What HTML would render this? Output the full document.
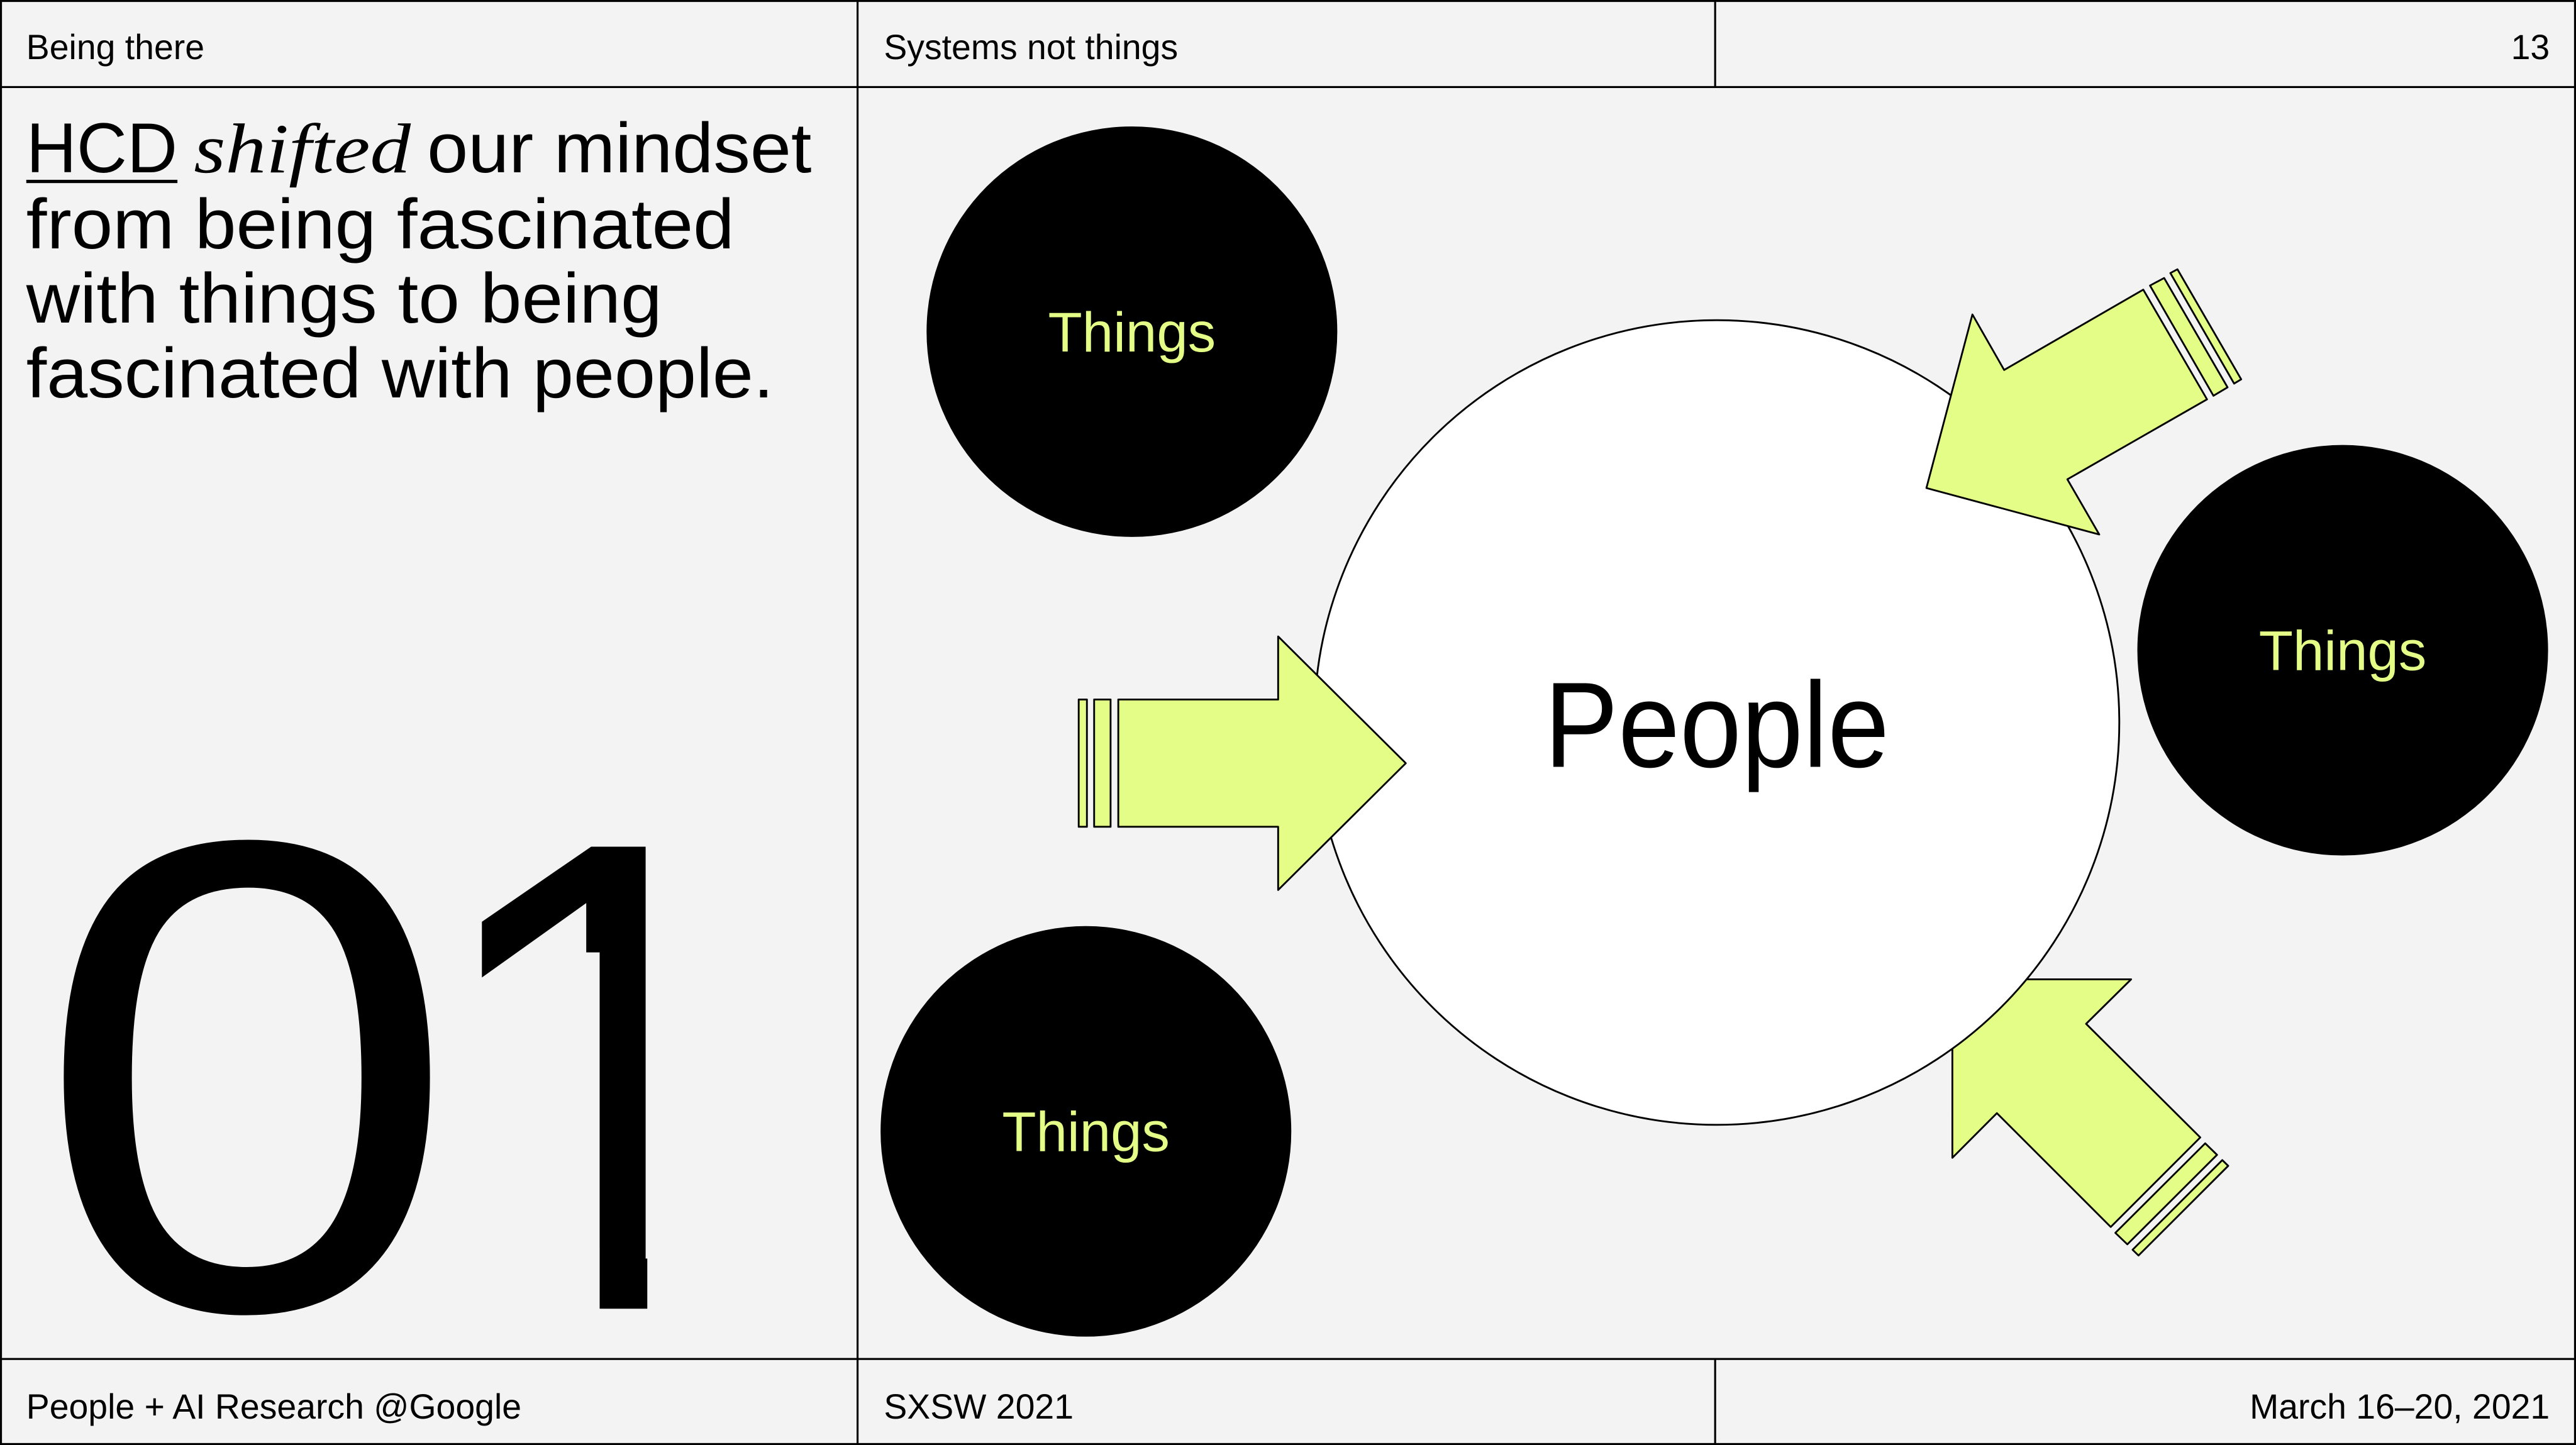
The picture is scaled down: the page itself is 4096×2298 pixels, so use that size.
<!DOCTYPE html>
<html><head><meta charset="utf-8"><style>
html,body{margin:0;padding:0;background:#f3f3f3;}
svg{display:block;}
</style></head><body>
<svg width="4096" height="2298" viewBox="0 0 1568 880" preserveAspectRatio="none" xmlns="http://www.w3.org/2000/svg">
<rect x="0" y="0" width="1568" height="880" fill="#f3f3f3"/>
<g stroke="#000" stroke-width="1.2" fill="none">
<rect x="0.6" y="0.6" width="1566.8" height="878.8"/>
<line x1="0" y1="53" x2="1568" y2="53"/>
<line x1="0" y1="827.6" x2="1568" y2="827.6"/>
<line x1="522" y1="0" x2="522" y2="880"/>
<line x1="1044" y1="0" x2="1044" y2="53"/>
<line x1="1044" y1="827.6" x2="1044" y2="880"/>
</g>
<g font-family="'Liberation Sans', sans-serif" font-size="21.2" fill="#000">
<text x="16" y="36">Being there</text>
<text x="538" y="36">Systems not things</text>
<text x="1552" y="36" text-anchor="end">13</text>
<text x="16" y="864">People + AI Research @Google</text>
<text x="538" y="864">SXSW 2021</text>
<text x="1552" y="864" text-anchor="end">March 16–20, 2021</text>
</g>
<g font-family="'Liberation Sans', sans-serif" font-size="43" fill="#000">
<text x="16" y="105" textLength="92" lengthAdjust="spacingAndGlyphs">HCD</text>
<text x="118" y="105" font-family="'Liberation Serif', serif" font-style="italic" textLength="132" lengthAdjust="spacingAndGlyphs">shifted</text>
<text x="260" y="105" textLength="234" lengthAdjust="spacingAndGlyphs">our mindset</text>
<text x="16" y="151.3" textLength="431" lengthAdjust="spacingAndGlyphs">from being fascinated</text>
<text x="16" y="196.5" textLength="387" lengthAdjust="spacingAndGlyphs">with things to being</text>
<text x="16" y="242" textLength="455" lengthAdjust="spacingAndGlyphs">fascinated with people.</text>
</g>
<rect x="16" y="109.5" width="92" height="2" fill="#000"/>
<text transform="translate(20.6,797) scale(1.14,1)" font-family="'Liberation Sans', sans-serif" font-size="409" fill="#000">0</text>
<text x="254" y="797" font-family="'Liberation Sans', sans-serif" font-size="409" fill="#000">1</text>
<rect x="285" y="760" width="80" height="42" fill="#f3f3f3"/>
<rect x="350" y="580" width="15" height="222" fill="#f3f3f3"/>
<rect x="394" y="755" width="81" height="47" fill="#f3f3f3"/>
<rect x="400" y="560" width="10" height="242" fill="#f3f3f3"/>

<circle cx="689" cy="202" r="125" fill="#000"/>
<circle cx="1426" cy="396" r="125" fill="#000"/>
<circle cx="661" cy="689" r="125" fill="#000"/>
<g font-family="'Liberation Sans', sans-serif" font-size="34" fill="#e4fd86" text-anchor="middle">
<text x="689" y="214">Things</text>
<text x="1426" y="408">Things</text>
<text x="661" y="701">Things</text>
</g>

<g fill="#e4fd86" stroke="#000" stroke-width="1.1" stroke-linejoin="round">
<polygon points="1188.4,596.4 1297.2,596.4 1269.8,623.5 1339.3,692.7 1284.8,747.2 1215.5,677.9 1188.4,705.1"/>
<polygon points="1287.6,750.8 1342.3,696.3 1349.5,703.3 1294.9,757.8"/>
<polygon points="1298.1,761.1 1352.7,706.5 1356.3,710 1301.7,764.6"/>
</g>
<circle cx="1045" cy="440" r="245" fill="#fff" stroke="#000" stroke-width="1.1"/>
<text x="940" y="467" font-family="'Liberation Sans', sans-serif" font-size="74" textLength="210" lengthAdjust="spacingAndGlyphs" fill="#000">People</text>

<g fill="#e4fd86" stroke="#000" stroke-width="1.1" stroke-linejoin="round">
<polygon points="680.7,426 778,426 778,387.6 855.7,464.8 778,542 778,503.5 680.7,503.5"/>
<rect x="656.6" y="426" width="5" height="77.5"/>
<rect x="666" y="426" width="10" height="77.5"/>
<polygon points="1172.6,297.2 1200.6,191.5 1219.9,225.3 1304.6,176.4 1343.4,243.2 1258.4,291.9 1277.8,325.5"/>
<polygon points="1308.7,173.9 1317.3,169.3 1355.9,235.9 1347.3,241"/>
<polygon points="1321.1,166.3 1325.4,164 1364.2,231 1359.9,233.6"/>
</g>
</svg>
</body></html>
